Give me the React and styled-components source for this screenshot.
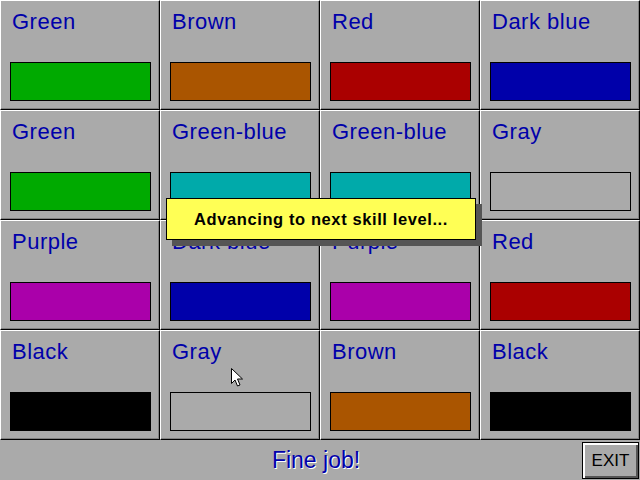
import React from "react";
import styled, { createGlobalStyle } from "styled-components";

const Global = createGlobalStyle`
  html, body { margin: 0; padding: 0; background: #aaaaaa; }
  body { font-family: "Liberation Sans", Arial, sans-serif; }
`;

const Screen = styled.div`
  position: relative;
  width: 640px;
  height: 480px;
  overflow: hidden;
  background: #aaaaaa;
  display: flex;
  flex-direction: column;
`;

const Board = styled.div`
  display: grid;
  grid-template-columns: repeat(4, 160px);
  grid-template-rows: repeat(4, 110px);
`;

const Cell = styled.div`
  box-sizing: border-box;
  display: flex;
  flex-direction: column;
  padding: 8px 0 8px 9px;
  border-top: 1px solid #ffffff;
  border-left: 1px solid #ffffff;
  border-right: 1px solid #000000;
  border-bottom: 1px solid #000000;
  box-shadow: inset -1px -1px 0 #808080;
`;

const Label = styled.div`
  margin-left: 2px;
  font-size: 22px;
  line-height: 25px;
  letter-spacing: 0.5px;
  color: #0000aa;
  white-space: nowrap;
`;

const Swatch = styled.div`
  box-sizing: border-box;
  margin-top: auto;
  width: 141px;
  height: 39px;
  border: 1px solid #000000;
  background: ${(p) => p.$color};
`;

const Bar = styled.div`
  flex: 1;
  display: grid;
  grid-template-columns: 1fr auto 1fr;
  align-items: center;
`;

const Message = styled.div`
  grid-column: 2;
  margin-right: 8px;
  font-size: 23px;
  color: #0000aa;
  text-shadow: 1px 1px 0 #ffffff;
`;

const ExitButton = styled.button`
  grid-column: 3;
  justify-self: end;
  align-self: start;
  box-sizing: border-box;
  margin: 2px 1px 0 0;
  width: 57px;
  height: 37px;
  padding: 0;
  background: #aaaaaa;
  border: 1px solid #000000;
  box-shadow: inset 1px 1px 0 #ffffff, inset 2px 2px 0 #ffffff,
    inset -1px -1px 0 #555555, inset -2px -2px 0 #555555;
  font-family: "Liberation Sans", Arial, sans-serif;
  font-size: 17px;
  color: #000000;
  cursor: default;
`;

const Popup = styled.div`
  position: absolute;
  left: 166px;
  top: 198px;
  box-sizing: border-box;
  width: 310px;
  height: 42px;
  background: #ffff55;
  border: 1px solid #000000;
  box-shadow: 6px 6px 0 #555555;
  display: flex;
  align-items: center;
  justify-content: center;
  font-size: 16.5px;
  letter-spacing: 0.6px;
  font-weight: bold;
  color: #000000;
`;

const Cursor = styled.svg`
  position: absolute;
  left: 231px;
  top: 368px;
`;

const cells = [
  ["Green", "#00aa00"],
  ["Brown", "#aa5500"],
  ["Red", "#aa0000"],
  ["Dark blue", "#0000aa"],
  ["Green", "#00aa00"],
  ["Green-blue", "#00aaaa"],
  ["Green-blue", "#00aaaa"],
  ["Gray", "#aaaaaa"],
  ["Purple", "#aa00aa"],
  ["Dark blue", "#0000aa"],
  ["Purple", "#aa00aa"],
  ["Red", "#aa0000"],
  ["Black", "#000000"],
  ["Gray", "#aaaaaa"],
  ["Brown", "#aa5500"],
  ["Black", "#000000"],
];

export default function App() {
  return (
    <>
      <Global />
      <Screen>
        <Board>
          {cells.map(([name, color], i) => (
            <Cell key={i}>
              <Label>{name}</Label>
              <Swatch $color={color} />
            </Cell>
          ))}
        </Board>
        <Bar>
          <Message>Fine job!</Message>
          <ExitButton>EXIT</ExitButton>
        </Bar>
        <Popup>Advancing to next skill level...</Popup>
        <Cursor width="13" height="20" viewBox="0 0 13 20">
          <path
            d="M0.5 0.5 L0.5 15.5 L4 12 L6.5 18 L9 17 L6.5 11 L11.5 11 Z"
            fill="#ffffff"
            stroke="#000000"
            strokeWidth="1"
          />
        </Cursor>
      </Screen>
    </>
  );
}
